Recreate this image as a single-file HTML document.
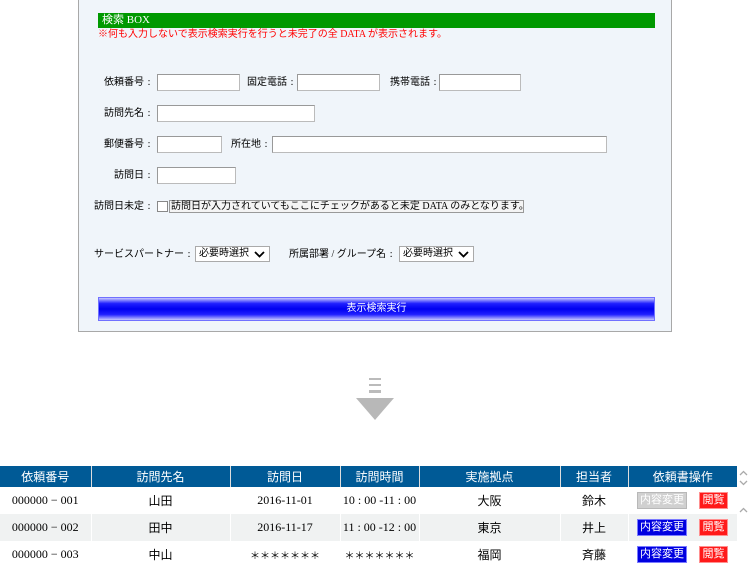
<!DOCTYPE html>
<html><head><meta charset="utf-8"><style>
*{margin:0;padding:0;box-sizing:border-box}
body{width:750px;height:569px;background:#fff;position:relative;overflow:hidden;font-family:"Liberation Serif","Noto Sans CJK JP",sans-serif;font-size:10px;color:#000}
.a{position:absolute}
.box{left:78px;top:-1px;width:594px;height:333px;border:1px solid #a8a8a8;background:#f0f5fa}
.in{position:absolute;background:#fff;border:1px solid #999;border-right-color:#bbb;border-bottom-color:#bbb;height:17px}
.lb{position:absolute;font-size:10px;line-height:12px;white-space:nowrap}
.c{display:inline-block;width:10px;text-align:center}
.sel{position:absolute;background:#fff;border:1px solid #aaa;height:16px;font-size:10px;line-height:14px;padding-left:3px;white-space:nowrap}
.sel svg{position:absolute;right:4px;top:4px}
table{position:absolute;left:0;top:466px;width:737px;border-collapse:collapse;table-layout:fixed;font-family:"Liberation Serif","Noto Sans CJK JP",sans-serif;font-size:12px}
th{background:#005a96;color:#fff;font-weight:normal;height:21px;border-right:1px solid #ddd;font-size:12px;white-space:nowrap}
td{height:27px;text-align:center;border-right:1px solid #fff;white-space:nowrap;overflow:hidden}
tr.g td{background:#f0f2f2}
.ast{font-family:"Noto Sans CJK JP",sans-serif;font-size:10px}
.b1,.b2{display:inline-block;height:17px;line-height:15px;font-size:11px;color:#fff;vertical-align:middle}
.b1{width:50px;background:#0000e0;border:1px solid #7a7aff}
.b1.d{background:#d0d0d0;border-color:#b8b8b8}
.b2{width:29px;background:#ff1a1a;border:1px solid #ff9090;margin-left:12px}
</style></head><body>
<div class="a box"></div>
<div class="a" style="left:98px;top:13px;width:557px;height:15px;background:#009900;color:#fff;font-size:11px;line-height:15px;padding-left:4px">検索 BOX</div>
<div class="lb" style="left:98px;top:29px;color:#f00;font-size:10px">※何も入力しないで表示検索実行を行うと未完了の全 DATA が表示されます。</div>

<div class="lb" style="left:104px;top:77px">依頼番号<span class="c">:</span></div><div class="in" style="left:157px;top:74px;width:83px"></div>
<div class="lb" style="left:247px;top:77px">固定電話<span class="c">:</span></div><div class="in" style="left:297px;top:74px;width:83px"></div>
<div class="lb" style="left:390px;top:77px">携帯電話<span class="c">:</span></div><div class="in" style="left:439px;top:74px;width:82px"></div>

<div class="lb" style="left:104px;top:108px">訪問先名<span class="c">:</span></div><div class="in" style="left:157px;top:105px;width:158px"></div>

<div class="lb" style="left:104px;top:139px">郵便番号<span class="c">:</span></div><div class="in" style="left:157px;top:136px;width:65px"></div>
<div class="lb" style="left:231px;top:139px">所在地<span class="c">:</span></div><div class="in" style="left:272px;top:136px;width:335px"></div>

<div class="lb" style="left:114px;top:170px">訪問日<span class="c">:</span></div><div class="in" style="left:157px;top:167px;width:79px"></div>

<div class="lb" style="left:94px;top:201px">訪問日未定<span class="c">:</span></div>
<div class="a" style="left:157px;top:201px;width:11px;height:11px;background:#fff;border:1px solid #888"></div>
<div class="lb" style="left:169px;top:200px;border:1px solid #999;padding:0 1px;height:13px;width:355px;background:#f4f4f4">訪問日が入力されていてもここにチェックがあると未定 DATA のみとなります。</div>

<div class="lb" style="left:94px;top:249px">サービスパートナー<span class="c">:</span></div>
<div class="sel" style="left:195px;top:246px;width:75px">必要時選択<svg width="11" height="7" viewBox="0 0 11 7"><path d="M1 1l4.5 4.5L10 1" fill="none" stroke="#000" stroke-width="1.8"/></svg></div>
<div class="lb" style="left:289px;top:249px">所属部署 / グループ名<span class="c">:</span></div>
<div class="sel" style="left:399px;top:246px;width:75px">必要時選択<svg width="11" height="7" viewBox="0 0 11 7"><path d="M1 1l4.5 4.5L10 1" fill="none" stroke="#000" stroke-width="1.8"/></svg></div>

<div class="a" style="left:98px;top:297px;width:557px;height:24px;border:1px solid #7070ff;background:linear-gradient(#c8c8ff 0%,#2020ff 25%,#0000f0 50%,#2020ff 75%,#c8c8ff 100%);color:#fff;text-align:center;line-height:22px;font-size:10px">表示検索実行</div>

<div class="a" style="left:369px;top:378px;width:12px;height:2px;background:#bbb"></div>
<div class="a" style="left:369px;top:384px;width:12px;height:2px;background:#bbb"></div>
<div class="a" style="left:369px;top:390px;width:12px;height:3px;background:#bbb"></div>
<svg class="a" style="left:356px;top:398px" width="38" height="22"><path d="M0 0H38L19 22Z" fill="#b8b8b8"/></svg>

<table>
<colgroup><col style="width:91px"><col style="width:139px"><col style="width:110px"><col style="width:79px"><col style="width:141px"><col style="width:68px"><col style="width:109px"></colgroup>
<tr><th>依頼番号</th><th>訪問先名</th><th>訪問日</th><th>訪問時間</th><th>実施拠点</th><th>担当者</th><th style="border-right:0">依頼書操作</th></tr>
<tr><td>000000 − 001</td><td>山田</td><td>2016-11-01</td><td>10 : 00 -11 : 00</td><td>大阪</td><td>鈴木</td><td><span class="b1 d">内容変更</span><span class="b2">閲覧</span></td></tr>
<tr class="g"><td>000000 − 002</td><td>田中</td><td>2016-11-17</td><td>11 : 00 -12 : 00</td><td>東京</td><td>井上</td><td><span class="b1">内容変更</span><span class="b2">閲覧</span></td></tr>
<tr><td>000000 − 003</td><td>中山</td><td class="ast">＊＊＊＊＊＊＊</td><td class="ast">＊＊＊＊＊＊＊</td><td>福岡</td><td>斉藤</td><td><span class="b1">内容変更</span><span class="b2">閲覧</span></td></tr>
</table>
<svg class="a" style="left:737px;top:466px" width="13" height="103"><path d="M3 9l3.5-3.5L10 9M3 15l3.5 3.5L10 15M3 46l3.5-3.5L10 46" fill="none" stroke="#aaa" stroke-width="1.3"/></svg>
</body></html>
